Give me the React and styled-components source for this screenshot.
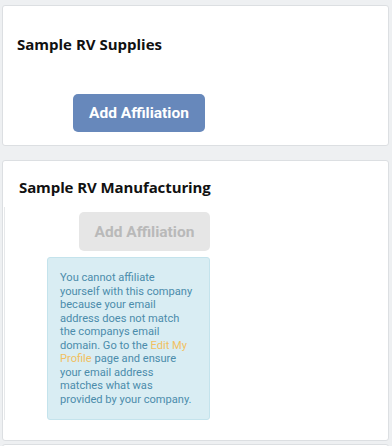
import React from 'react';
import styled, { createGlobalStyle } from 'styled-components';

const GlobalStyle = createGlobalStyle`
    body {
        margin: 0;
        background: #eef0f2;
        font-family: Roboto, 'Liberation Sans', sans-serif;
        overflow: hidden;
    }
`;

const Page = styled.div`
    display: flex;
    flex-direction: column;
    padding: 5px 3px 0 2px;
`;

const Card = styled.div`
    background: #fff;
    border: 1px solid #dcdfe2;
    border-radius: 3px;
    height: ${(p) => p.h}px;
    margin-top: ${(p) => p.gap || 0}px;
    box-sizing: border-box;
    flex-shrink: 0;
`;

const Title = styled.h4`
    margin: 0;
    padding: ${(p) => p.pad};
    font-family: 'Open Sans', sans-serif;
    font-weight: 700;
    font-size: 15px;
    line-height: 20px;
    color: #111;
    letter-spacing: ${(p) => p.spacing || 0}px;
`;

const Body = styled.div`
    margin-left: 1px;
    border-left: 1px solid #e6e8ea;
    display: flex;
    flex-direction: column;
    align-items: flex-start;
    padding: ${(p) => p.pad};
    gap: 6px;
`;

const Button = styled.button`
    width: ${(p) => p.w}px;
    height: ${(p) => p.h}px;
    margin-left: ${(p) => p.offset}px;
    margin-top: ${(p) => p.top || 0}px;
    border: none;
    border-radius: 5px;
    font-family: Roboto, sans-serif;
    font-weight: 700;
    font-size: 15.5px;
    background: ${(p) => (p.disabled ? '#e6e6e6' : '#6788bb')};
    color: ${(p) => (p.disabled ? '#b9b9b9' : '#fff')};
    cursor: ${(p) => (p.disabled ? 'default' : 'pointer')};
`;

const Alert = styled.div`
    width: 163px;
    box-sizing: border-box;
    padding: 13px 15px 13px 12px;
    background: #d9edf3;
    border: 1px solid #c4e3ec;
    border-radius: 3px;
    color: #4b8cab;
    font-size: 11.1px;
    line-height: 13.5px;
    a {
        color: #f2c060;
        text-decoration: none;
    }
`;

const App = () => (
    <>
        <GlobalStyle />
        <Page>
            <Card h={141}>
                <Title pad="28px 0 0 14px">Sample RV Supplies</Title>
                <Button w={132} h={38} offset={70} top={40}>
                    Add Affiliation
                </Button>
            </Card>
            <Card h={281} gap={14}>
                <Title pad="16px 0 10px 16px" spacing={-0.1}>
                    Sample RV Manufacturing
                </Title>
                <Body pad="5px 0 0 42px">
                    <Button w={131} h={39} offset={32} disabled>
                        Add Affiliation
                    </Button>
                    <Alert>
                        You cannot affiliate yourself with this company because your email
                        address does not match the companys email domain. Go to the{' '}
                        <a href="#">Edit My Profile</a> page and ensure your email address
                        matches what was provided by your company.
                    </Alert>
                </Body>
            </Card>
            <Card h={10} gap={3} />
        </Page>
    </>
);

export default App;
